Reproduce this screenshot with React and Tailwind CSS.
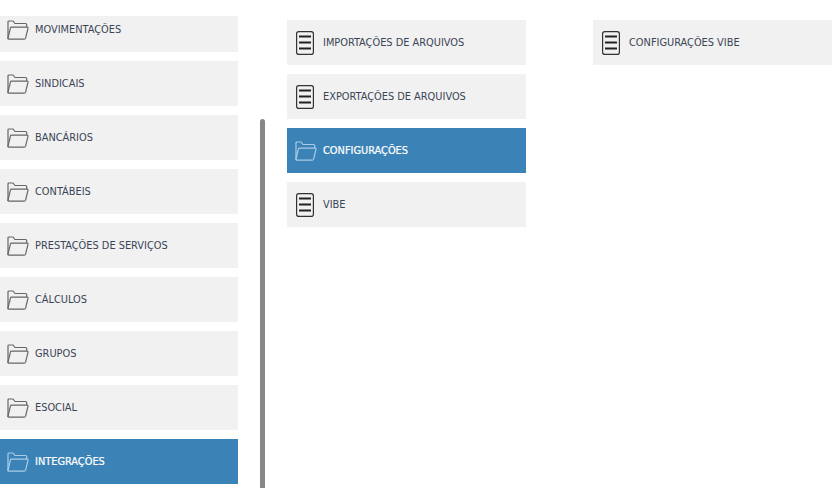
const column1 = [
  "MOVIMENTAÇÕES",
  "SINDICAIS",
  "BANCÁRIOS",
  "CONTÁBEIS",
  "PRESTAÇÕES DE SERVIÇOS",
  "CÁLCULOS",
  "GRUPOS",
  "ESOCIAL",
  "INTEGRAÇÕES",
];

const column2 = [
  { label: "IMPORTAÇÕES DE ARQUIVOS", type: "doc" },
  { label: "EXPORTAÇÕES DE ARQUIVOS", type: "doc" },
  { label: "CONFIGURAÇÕES", type: "folder", active: true, inset: true },
  { label: "VIBE", type: "doc" },
];

const FolderIcon = ({ active }) => (
  <svg
    width="22"
    height="20"
    viewBox="0 0 22 20"
    fill="none"
    stroke={active ? "#a9cde6" : "#666666"}
    strokeWidth="1.2"
    className="shrink-0"
  >
    <path d="M1 19V2Q1 1 2 1H6L8 3.5H18.5Q19.7 3.5 19.7 4.7V7" />
    <path d="M4.5 7.2H20Q21.2 7.2 21 8.2L18.6 18.2Q18.3 19.2 17.3 19.2H1.8Q0.8 19.2 1 18.2L3.4 8.2Q3.6 7.2 4.5 7.2Z" />
  </svg>
);

const DocIcon = () => (
  <svg width="18" height="24" viewBox="0 0 18 24" fill="none" className="shrink-0">
    <rect x="0.6" y="0.6" width="16.8" height="22.8" rx="2.2" stroke="#333333" strokeWidth="1.2" />
    <path d="M3 5.5H15M3 11.5H15M3 17.5H15" stroke="#222222" strokeWidth="1.8" />
  </svg>
);

const Row = ({ label, type, active, inset }) => (
  <div
    className={`flex h-[45px] items-center ${active ? "bg-[#3b83b7] text-white [-webkit-text-stroke:0.2px_white]" : "bg-[#f1f1f1] text-[#3a4455]"}`}
  >
    <div className={`flex shrink-0 ${type === "doc" ? "w-[36px] pl-[9px]" : inset ? "w-[36px] pl-[8px]" : "w-[35px] pl-[7px]"}`}>
      {type === "doc" ? <DocIcon /> : <FolderIcon active={active} />}
    </div>
    <span className="pt-[2px] text-[10.9px] leading-none">{label}</span>
  </div>
);

export default function App() {
  return (
    <div className="flex h-[488px] w-[833px] overflow-hidden bg-white font-['DejaVu_Sans_Condensed','DejaVu_Sans',sans-serif]">
      <div className="mt-4 h-[472px] w-[238px] shrink-0 overflow-hidden">
        <div className="-mt-[9px] flex flex-col gap-[9px]">
          {column1.map((label, i) => (
            <Row key={label} label={label} type="folder" active={i === column1.length - 1} />
          ))}
        </div>
      </div>
      <div className="ml-[22px] mt-[119px] h-[369px] w-[5px] shrink-0 rounded-t-full bg-[#888888]" />
      <div className="ml-[22px] mt-5 flex w-[239px] shrink-0 flex-col gap-[9px]">
        {column2.map((row) => (
          <Row key={row.label} {...row} />
        ))}
      </div>
      <div className="ml-[67px] mt-5 w-[239px] shrink-0">
        <Row label="CONFIGURAÇÕES VIBE" type="doc" />
      </div>
    </div>
  );
}
